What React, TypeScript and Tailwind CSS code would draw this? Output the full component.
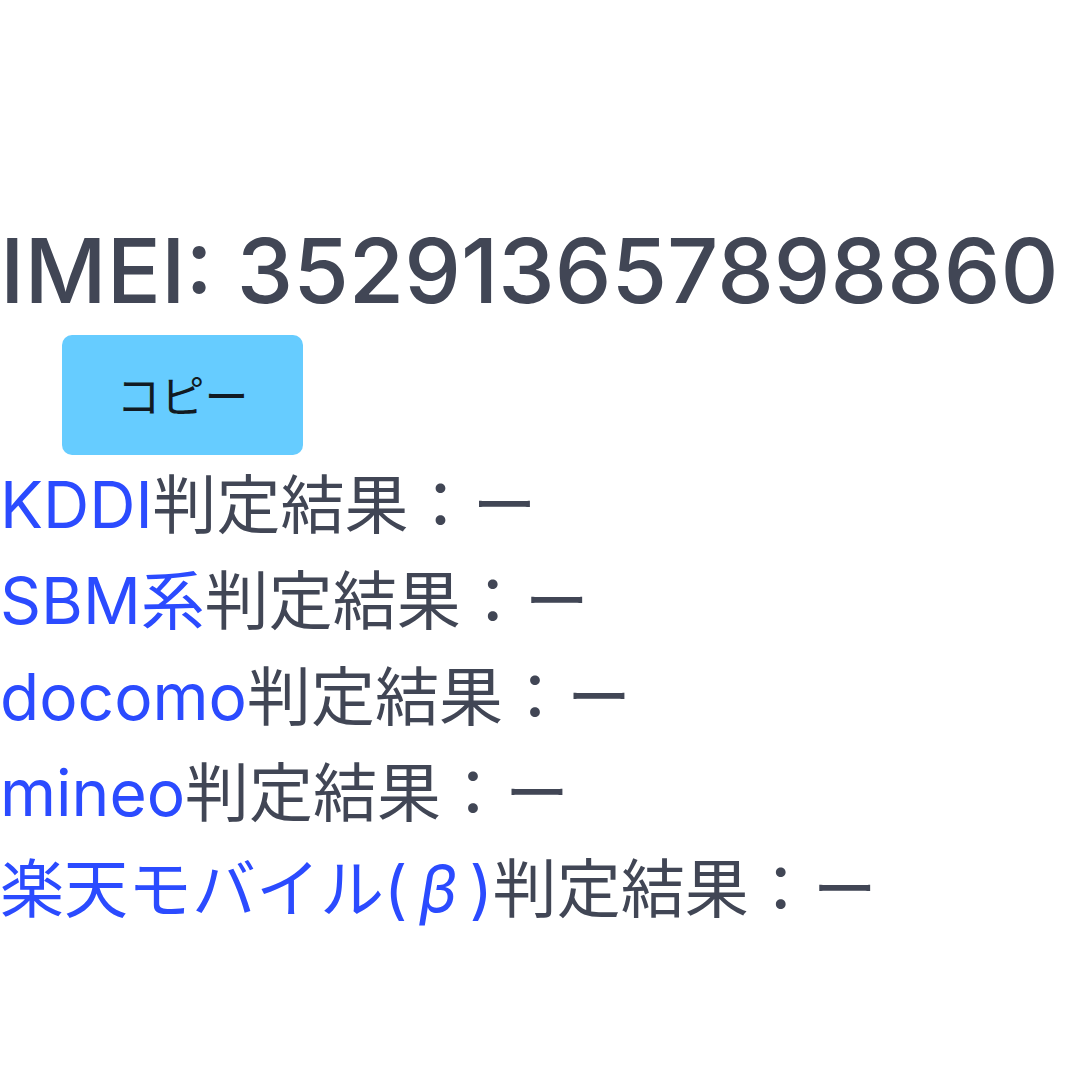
const ROWS = ['KDDI', 'SBM系', 'docomo', 'mineo'];

export default function App() {
  return (
    <div
      className="h-[1080px] w-[1080px] overflow-hidden bg-white pt-[226px] text-[#414655]"
      style={{ fontFamily: 'Inter, "Noto Sans CJK JP", sans-serif' }}
    >
      <h1 className="whitespace-nowrap text-[90px] font-medium leading-none">IMEI: 352913657898860</h1>
      <button
        className="ml-[62px] mt-[19px] flex h-[120px] w-[241px] items-center justify-center rounded-[10px] bg-[#66ccff] pb-[2px] text-[44px] text-[#111a22]"
        style={{ fontFamily: '"Noto Sans CJK JP", sans-serif' }}
      >
        コピー
      </button>
      <div className="mt-[2px] flex flex-col">
        {ROWS.map((r) => (
          <div key={r} className="whitespace-nowrap text-[64px] leading-[96px]">
            <span className="text-[#2b4bff]">{r}</span>判定結果：ー
          </div>
        ))}
        <div className="whitespace-nowrap text-[64px] leading-[96px]">
          <span className="text-[#2b4bff]">
            楽天モバイル(<span className="mx-[12px] italic">β</span>)
          </span>
          判定結果：ー
        </div>
      </div>
    </div>
  );
}
